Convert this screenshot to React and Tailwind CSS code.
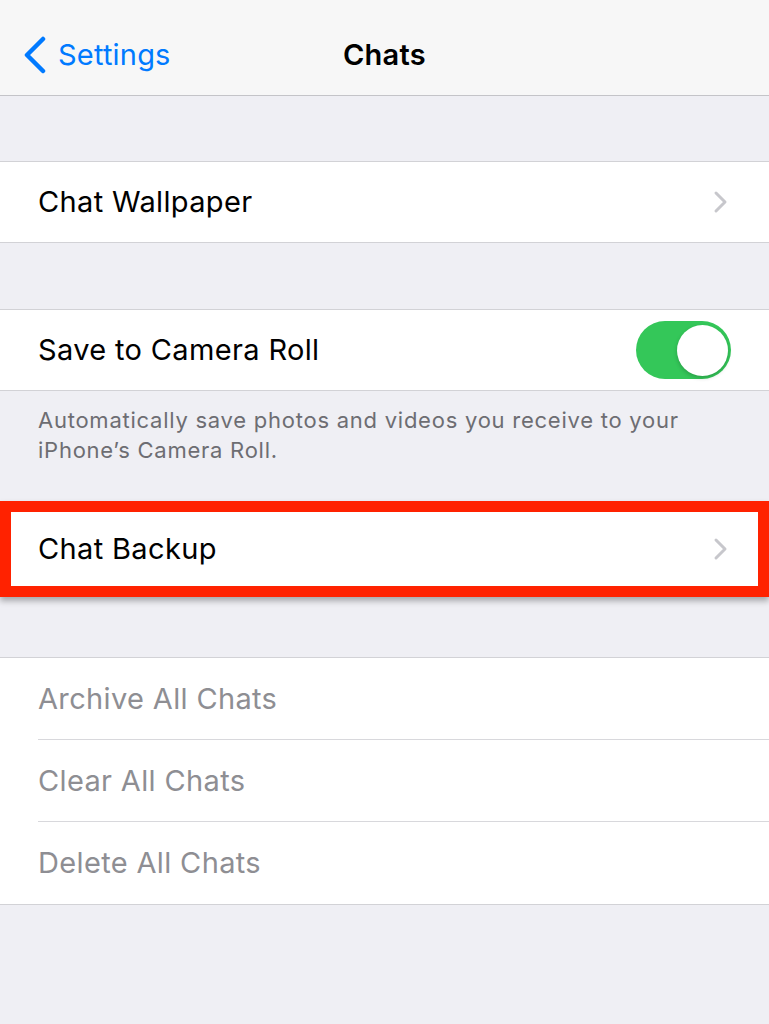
import React from "react";

const FONT = { fontFamily: "Inter, 'Noto Sans', sans-serif" };

function Chevron() {
  return (
    <svg width="16" height="24" viewBox="0 0 16 24" className="shrink-0">
      <path d="M3 3 L12 12 L3 21" fill="none" stroke="#c7c7cc" strokeWidth="3" strokeLinecap="round" strokeLinejoin="round" />
    </svg>
  );
}

function Row({ label, right, muted, divider, h = "h-[80px]" }) {
  return (
    <div className={`relative flex ${h} items-center justify-between pl-[38px] pr-[40px]`}>
      <span className={`text-[29px] tracking-[0.35px] ${muted ? "text-[#8e8e93]" : "text-black"}`}>{label}</span>
      {right}
      {divider && <div className="absolute bottom-0 left-[38px] right-0 h-px bg-[#d8d8dc]" />}
    </div>
  );
}

function Toggle() {
  return (
    <div className="mr-[-2px] flex h-[58px] w-[95px] items-center justify-end rounded-full bg-[#34c759] p-[3px]">
      <div className="h-[51px] w-[51px] rounded-full bg-white shadow-[0_2px_4px_rgba(0,0,0,0.2)]" />
    </div>
  );
}

export default function App() {
  return (
    <div className="min-h-[1024px] w-[769px] bg-[#efeff4]" style={FONT}>
      {/* nav bar */}
      <div className="relative flex h-[96px] items-center border-b border-[#c4c4c8] bg-[#f7f7f7]">
        <div className="flex items-center pl-[22px] pt-[14px]">
          <svg width="26" height="38" viewBox="0 0 26 38">
            <path d="M21 3 L5 19 L21 35" fill="none" stroke="#007aff" strokeWidth="4.5" strokeLinecap="round" strokeLinejoin="round" />
          </svg>
          <span className="ml-[10px] text-[29px] text-[#007aff] tracking-[0.2px]">Settings</span>
        </div>
        <div className="absolute inset-x-0 top-[14px] flex h-[82px] items-center justify-center">
          <span className="text-[29px] font-semibold text-black tracking-[0.3px]">Chats</span>
        </div>
      </div>

      <div className="h-[65px]" />
      <div className="border-y border-[#d2d2d6] bg-white">
        <Row label="Chat Wallpaper" right={<Chevron />} />
      </div>

      <div className="h-[66px]" />
      <div className="border-y border-[#d2d2d6] bg-white">
        <Row label="Save to Camera Roll" right={<Toggle />} />
      </div>
      <div className="px-[38px] pt-[14px] text-[22px] leading-[30px] tracking-[0.75px] text-[#6d6d72]">
        Automatically save photos and videos you receive to your iPhone’s Camera Roll.
      </div>

      <div className="h-[36px]" />
      <div className="border-[11px] border-[#ff2200] bg-white shadow-[0_4px_6px_rgba(0,0,0,0.3)]">
        <div className="flex h-[74px] items-center justify-between pl-[27px] pr-[29px]">
          <span className="text-[29px] tracking-[0.35px] text-black">Chat Backup</span>
          <Chevron />
        </div>
      </div>

      <div className="h-[60px]" />
      <div className="border-y border-[#d2d2d6] bg-white">
        <Row label="Archive All Chats" muted divider h="h-[82px]" />
        <Row label="Clear All Chats" muted divider h="h-[82px]" />
        <Row label="Delete All Chats" muted h="h-[82px]" />
      </div>
    </div>
  );
}
